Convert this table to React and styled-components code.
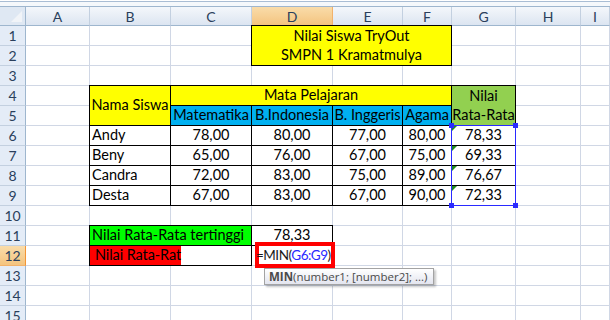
import React from "react";
import styled, { createGlobalStyle, css } from "styled-components";

const GlobalStyle = createGlobalStyle`
  html, body {
    margin: 0;
    padding: 0;
    background: #fff;
  }
  body {
    width: 610px;
    height: 320px;
    overflow: hidden;
    font-family: "Lato", "Liberation Sans", sans-serif;
  }
`;

const COLS = ["A", "B", "C", "D", "E", "F", "G", "H", "I"];
const ROW_COUNT = 15;
const ACTIVE_COL = "D";
const ACTIVE_ROW = 12;

const subjects = ["Matematika", "B.Indonesia", "B. Inggeris", "Agama"];

const students = [
  { name: "Andy", scores: ["78,00", "80,00", "77,00", "80,00"], avg: "78,33" },
  { name: "Beny", scores: ["65,00", "76,00", "67,00", "75,00"], avg: "69,33" },
  { name: "Candra", scores: ["72,00", "83,00", "75,00", "89,00"], avg: "76,67" },
  { name: "Desta", scores: ["67,00", "83,00", "67,00", "90,00"], avg: "72,33" },
];

// sheet column n -> grid column n + 2 (first grid column is the row numbers)
// sheet row n -> grid row n + 1 (first grid row is the letters)
const col = (letter) => COLS.indexOf(letter) + 2;
const row = (n) => n + 1;

const Window = styled.div`
  width: 610px;
  height: 320px;
  overflow: hidden;
  background: #fff;
  display: flex;
  flex-direction: column;
`;

const TopStrip = styled.div`
  flex: none;
  height: 7px;
  background: linear-gradient(
    #fff 0 1px,
    #a9bdd4 1px 2px,
    #f5f8fb 2px 6px,
    #9eb6ce 6px 7px
  );
`;

const Sheet = styled.div`
  display: grid;
  grid-template-columns: 26px 64px 81px 81px 81px 70px 49px 64px 65px 1fr;
  grid-template-rows: 19px repeat(15, 20px);
  font-family: "Lato", "Liberation Sans", sans-serif;
  font-size: 14.5px;
  color: #000;
`;

const headBase = css`
  display: flex;
  align-items: center;
  justify-content: center;
  font-size: 14px;
  color: #2a3f5c;
  border-right: 1px solid #9eb6ce;
  border-bottom: 1px solid #9eb6ce;
`;

const Corner = styled.div`
  ${headBase}
  grid-row: 1;
  grid-column: 1;
  background: #dfe8f3;
  justify-content: flex-end;
  align-items: flex-end;
  padding: 0 3px 3px 0;

  svg {
    display: block;
  }
`;

const ColHead = styled.div`
  ${headBase}
  grid-row: 1;
  grid-column: ${(p) => p.$c};
  background: ${(p) =>
    p.$active
      ? "linear-gradient(#f9dcaa, #f4c47f)"
      : "linear-gradient(#f4f7fb, #dce5f1)"};
  border-right-color: ${(p) => (p.$active ? "#f2b26b" : "#c3d0e0")};
  border-bottom-color: ${(p) => (p.$active ? "#f29536" : "#9eb6ce")};
`;

const RowHead = styled.div`
  ${headBase}
  grid-column: 1;
  grid-row: ${(p) => p.$r};
  background: ${(p) =>
    p.$active ? "linear-gradient(#f9dcaa, #f4c47f)" : "#e4ecf7"};
  border-bottom-color: ${(p) => (p.$active ? "#f2b26b" : "#c3d0e0")};
  border-right-color: ${(p) => (p.$active ? "#f29536" : "#9eb6ce")};
`;

const GridCell = styled.div`
  grid-column: ${(p) => p.$c};
  grid-row: ${(p) => p.$r};
  border-right: 1px solid #d0d7e5;
  border-bottom: 1px solid #d0d7e5;
`;

const Block = styled.div`
  grid-column: ${(p) => p.$c} / span ${(p) => p.$cs || 1};
  grid-row: ${(p) => p.$r} / span ${(p) => p.$rs || 1};
  margin: -1px 0 0 -1px;
  position: relative;
  border: 1px solid #000;
  background: ${(p) => p.$bg || "#fff"};
  display: flex;
  align-items: ${(p) => (p.$mid ? "center" : "flex-end")};
  justify-content: ${(p) => (p.$align === "left" ? "flex-start" : "center")};
  padding: ${(p) => (p.$flush ? "0" : "0 2px 1px 2px")};
  white-space: nowrap;
  overflow: hidden;
  line-height: 18px;
`;

const Lines = styled.div`
  display: flex;
  flex-direction: column;
  align-items: center;
  align-self: stretch;
  width: 100%;
`;

const Line = styled.div`
  height: 20px;
  display: flex;
  align-items: flex-end;
  justify-content: center;
  padding-bottom: 1px;
  box-sizing: border-box;
`;

const RedFill = styled.div`
  width: 91px;
  flex: none;
  align-self: stretch;
  background: #ff0000;
  padding: 0 0 1px 5px;
  box-sizing: border-box;
  display: flex;
  align-items: flex-end;
  letter-spacing: -0.1px;
`;

const ErrorMark = styled.span`
  position: absolute;
  top: 0;
  left: 0;
  width: 0;
  height: 0;
  border-top: 5px solid #1f8a1f;
  border-right: 5px solid transparent;
`;

const Selection = styled.div`
  grid-column: ${(p) => p.$c};
  grid-row: ${(p) => p.$r} / span ${(p) => p.$rs};
  margin: -1px 0 0 -1px;
  border: 1px solid #2a2aff;
  position: relative;
`;

const Handle = styled.span`
  position: absolute;
  width: 5px;
  height: 5px;
  background: #2a2aff;
  ${(p) => (p.$top ? "top: -3px;" : "bottom: -3px;")}
  ${(p) => (p.$left ? "left: -3px;" : "right: -3px;")}
`;

const EditHost = styled.div`
  grid-column: ${(p) => p.$c};
  grid-row: ${(p) => p.$r};
  position: relative;
`;

const Editor = styled.div`
  position: absolute;
  left: 3px;
  top: -4px;
  width: 80px;
  height: 26px;
  box-sizing: border-box;
  border: 4px solid #ff0000;
  background: #fff;
  font-size: 13.5px;
  letter-spacing: -0.5px;
  line-height: 18px;
  white-space: nowrap;
  text-indent: -3px;
  color: #1a1a1a;
`;

const Ref = styled.span`
  color: #2929ff;
`;

const Tip = styled.div`
  position: absolute;
  left: 12px;
  top: 22px;
  height: 17px;
  box-sizing: border-box;
  padding: 0 6px 0 4px;
  display: flex;
  align-items: center;
  border: 1px solid #a3a3a3;
  background: linear-gradient(#ffffff, #e3e5ef);
  box-shadow: 2px 2px 2px rgba(0, 0, 0, 0.22);
  font-family: "Open Sans", "Liberation Sans", sans-serif;
  font-size: 11.5px;
  color: #4a4a4a;
  white-space: nowrap;
  z-index: 2;

  b {
    font-weight: 700;
  }
`;

export default function App() {
  const blanks = [];
  for (let r = 1; r <= ROW_COUNT; r++) {
    COLS.forEach((letter) => {
      blanks.push(<GridCell key={`${letter}${r}`} $c={col(letter)} $r={row(r)} />);
    });
  }

  const dataCols = ["C", "D", "E", "F"];

  return (
    <Window>
      <GlobalStyle />
      <TopStrip />
      <Sheet>
        <Corner>
          <svg width="11" height="11" viewBox="0 0 11 11">
            <path d="M11 0 L11 11 L0 11 Z" fill="#f1f4f8" />
          </svg>
        </Corner>
        {COLS.map((letter) => (
          <ColHead key={letter} $c={col(letter)} $active={letter === ACTIVE_COL}>
            {letter}
          </ColHead>
        ))}
        {Array.from({ length: ROW_COUNT }, (_, i) => (
          <RowHead key={i} $r={row(i + 1)} $active={i + 1 === ACTIVE_ROW}>
            {i + 1}
          </RowHead>
        ))}
        {blanks}

        <Block $c={col("D")} $cs={3} $r={row(1)} $rs={2} $bg="#ffff00" $flush>
          <Lines>
            <Line>Nilai Siswa TryOut</Line>
            <Line>SMPN 1 Kramatmulya</Line>
          </Lines>
        </Block>

        <Block $c={col("B")} $r={row(4)} $rs={2} $bg="#ffff00" $mid>
          Nama Siswa
        </Block>
        <Block $c={col("C")} $cs={4} $r={row(4)} $bg="#ffff00">
          Mata Pelajaran
        </Block>
        <Block $c={col("G")} $r={row(4)} $rs={2} $bg="#92d050" $flush>
          <Lines>
            <Line>Nilai</Line>
            <Line>Rata-Rata</Line>
          </Lines>
        </Block>
        {subjects.map((s, i) => (
          <Block key={s} $c={col(dataCols[i])} $r={row(5)} $bg="#00b0f0">
            {s}
          </Block>
        ))}

        {students.map((st, i) => (
          <React.Fragment key={st.name}>
            <Block $c={col("B")} $r={row(6 + i)} $align="left">
              {st.name}
            </Block>
            {st.scores.map((v, j) => (
              <Block key={j} $c={col(dataCols[j])} $r={row(6 + i)}>
                {v}
              </Block>
            ))}
            <Block $c={col("G")} $r={row(6 + i)}>
              <ErrorMark />
              {st.avg}
            </Block>
          </React.Fragment>
        ))}

        <Selection $c={col("G")} $r={row(6)} $rs={4}>
          <Handle $top $left />
          <Handle $top />
          <Handle $left />
          <Handle />
        </Selection>

        <Block $c={col("B")} $cs={2} $r={row(11)} $bg="#00ff00" $align="left">
          Nilai Rata-Rata tertinggi
        </Block>
        <Block $c={col("D")} $r={row(11)}>
          78,33
        </Block>
        <Block $c={col("B")} $cs={2} $r={row(12)} $align="left" $flush>
          <RedFill>Nilai Rata-Rat</RedFill>
        </Block>

        <EditHost $c={col("D")} $r={row(12)}>
          <Editor>
            =MIN(<Ref>G6:G9</Ref>)
          </Editor>
          <Tip>
            <b>MIN</b>(number1; [number2]; ...)
          </Tip>
        </EditHost>
      </Sheet>
    </Window>
  );
}
